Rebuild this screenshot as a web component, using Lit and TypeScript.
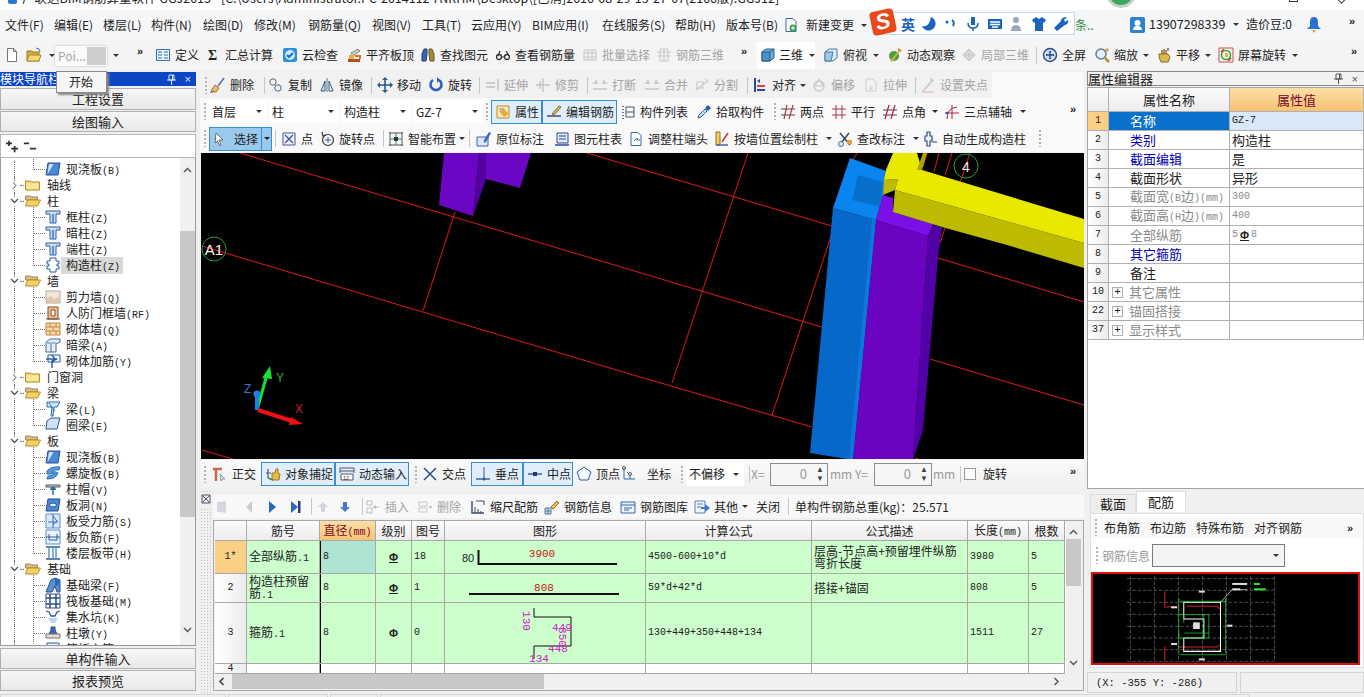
import { LitElement, html, css, svg, nothing } from "lit";
import { customElement } from "lit/decorators.js";

type Item = { x: number; k?: string; ic?: string; t?: string; dis?: boolean; w?: number; cls?: string; v?: string };
const T = (c: number, ic: string, t?: string, o: Partial<Item> = {}): Item => ({ x: c - 8, k: "tool", ic, t, ...o });
const D = (c: number, ic: string, t?: string): Item => T(c, ic, t, { dis: true });
const C = (c: number): Item => ({ x: c - 4, k: "caret" });
const S = (c: number): Item => ({ x: c, k: "sep" });
const G = (c: number): Item => ({ x: c - 1, k: "grip" });
const M = (c: number): Item => ({ x: c - 5, k: "more" });
const L = (x: number, t: string, cls = ""): Item => ({ x, k: "text", t, cls });
const On = (x: number, w: number, ic: string, t: string): Item => ({ x, w, k: "on", ic, t });
const Sel = (x: number, w: number, t: string): Item => ({ x, w, k: "sel", t });
const End = (x: number): Item => ({ x, k: "end" });

const s = (p: string, c = "#333", w = 1) => svg`<path d=${p} fill="none" stroke=${c} stroke-width=${w}/>`;
const f = (p: string, c: string, st = "none") => svg`<path d=${p} fill=${c} stroke=${st} stroke-width="1"/>`;

const IC: Record<string, any> = {
  doc: svg`${f("M3.5 1.5h6l3 3v10h-9z", "#fff", "#777")}${s("M9.5 1.5v3h3", "#777")}`,
  open: svg`${f("M1 4h5l1 1h6v9H1z", "#d9a93a", "#9a7a20")}${f("M3 8h12l-2 6H1z", "#f6d878", "#a98a2a")}${s("M10 1l3 1 1 3", "#3a78c8")}`,
  def: svg`${f("M1.5 2.5h13v11h-13z", "#eaf3fc", "#2f6fb6")}${s("M3 5h4M3 8h4M3 11h4M9 5h4M9 8h4M9 11h4", "#2f6fb6")}`,
  sigma: svg`<text x="3" y="13" font-size="14" font-weight="700" font-family="Liberation Serif, serif" fill="#222">Σ</text>`,
  check: svg`${f("M1 3q0-2 2-2h10q2 0 2 2v10q0 2-2 2H3q-2 0-2-2z", "#2a8ee0")}<circle cx="8" cy="8" r="5" fill="#cfe8fb"/>${s("M5 8l2 2 4-4", "#1a6fc0", 2)}`,
  level: svg`${f("M2 12h12v3H2z", "#b84a20")}${f("M5 6l7-4 2 2-7 5z", "#c9c9b8", "#888")}${f("M3 8h5v4H3z", "#e6b040")}${s("M9 9h5v3", "#d27a20", 2)}`,
  binoc: svg`${f("M2 7l2-5h3v5l-1 7H2z", "#3a66b8", "#223a70")}${f("M14 7l-2-5H9v5l1 7h4z", "#a58a30", "#6a5a20")}`,
  glass: svg`<circle cx="4" cy="10" r="2.5" fill="none" stroke="#333" stroke-width="1.3"/><circle cx="12" cy="10" r="2.5" fill="none" stroke="#333" stroke-width="1.3"/>${s("M6.5 10h3M5 4l-2 5M11 4l3 5", "#333", 1.2)}`,
  grid: svg`${s("M2 3h12v10H2zM2 6h12M2 10h12M6 3v10M10 3v10", "#c4c4c4")}`,
  grid2: svg`${s("M4 2h8v12H4zM1 5h14M1 9h14M8 2v12", "#c4c4c4")}`,
  cube: svg`${f("M2 5l4-3h8v9l-4 3H2z", "#6fb0d8", "#245a88")}${f("M2 5h8v9H2z", "#4a90c4", "#245a88")}${s("M10 5l4-3", "#245a88")}`,
  top: svg`${f("M2 5l4-3h8v9l-4 3H2z", "#d8ecfa", "#4a7aa0")}${f("M2 5h8l-2 9H2z", "#9cc8e6", "#4a7aa0")}`,
  orbit: svg`<circle cx="7" cy="9" r="5" fill="#4aa040"/>${f("M3 14L12 3l1 1-8 11z", "#d8b040")}${s("M11 2l3 2", "#d08020", 2)}`,
  local: svg`${f("M2 8l6-6 6 6-6 6z", "#dcdcdc", "#bbb")}${s("M4 8h8M8 4v8", "#c4c4c4")}`,
  full: svg`<circle cx="8" cy="8" r="6.5" fill="#cfe0f4" stroke="#2a4a88" stroke-width="1.4"/>${s("M8 4v8M4 8h8", "#2a4a88", 1.4)}${s("M7 5l1-1 1 1M7 11l1 1 1-1M5 7L4 8l1 1M11 7l1 1-1 1", "#2a4a88")}`,
  zoom: svg`<circle cx="7" cy="7" r="5" fill="#e4eef8" stroke="#6a7a92" stroke-width="1.5"/>${s("M11 11l4 4", "#b89030", 2.5)}${s("M13 1v4M11 3h4", "#c09030")}`,
  hand: svg`${f("M5 15l-2-5V7h9l2 3-2 5z", "#e0b850", "#8a6a20")}${s("M6 7V3M8 7V2M10 7V3", "#8a6a20", 1.4)}${s("M12 1v3M11 2h2", "#666")}`,
  rot: svg`${f("M1 1h14v14H1z", "#eef7ee", "#d05050")}<circle cx="8" cy="8" r="4.5" fill="none" stroke="#3aa040" stroke-width="1.6"/>${s("M3 5l3-3M13 11l-3 3", "#d04040", 1.6)}${f("M7 6h3v4H7z", "#e0b040")}`,
  broom: svg`${s("M14 1L8 9", "#5a70b0", 1.6)}${f("M5 8l4 3-3 4-5-1z", "#e4c070", "#a07030")}${f("M1 14l3 1-4 1z", "#a040a0")}`,
  copy: svg`<circle cx="5" cy="5" r="3.2" fill="none" stroke="#666"/><circle cx="10" cy="11" r="3.2" fill="none" stroke="#3a6a9a"/>${s("M7 7l2 2", "#999")}`,
  mirror: svg`${s("M8 1v14", "#777")}${f("M6 4v10H2z", "#d8e6f2", "#2a5a8a")}${f("M10 4v10h4z", "#fff", "#2a5a8a")}`,
  move: svg`${s("M8 1v14M1 8h14", "#2a5a8a", 1.6)}${f("M8 0l3 3H5zM8 16l-3-3h6zM0 8l3-3v6zM16 8l-3 3V5z", "#2a5a8a")}`,
  turn: svg`<path d="M5 3a5.5 5.5 0 1 0 6 0" fill="none" stroke="#2a60c0" stroke-width="2.6"/>${f("M9 0v6l3-3z", "#2a60c0")}`,
  ext: svg`${s("M2 6h9M2 10h9M14 2v12", "#c0c0c0", 1.4)}`,
  trim: svg`${s("M1 8h14M8 1v14M5 4v8", "#c4c4c4", 1.4)}`,
  brk: svg`${s("M1 6h5M10 6h5M1 12h14M4 3v4M12 3v4", "#c8c8c0", 1.6)}`,
  split: svg`${s("M2 13L14 4M3 5h6v6H3z", "#c8c8c8", 1.2)}${s("M11 2l3 2", "#c8c8c8")}`,
  align: svg`${s("M3 1v14", "#2a4a98", 2)}${f("M5 4l3-2v4z", "#2a4a98")}${f("M5 8h8v2H5z", "#d04040")}${f("M5 12h8v2H5z", "#2a4a98")}`,
  offset: svg`<circle cx="8" cy="9" r="5" fill="none" stroke="#c8c8c8" stroke-width="1.4"/>${s("M8 2l-4 7h8z", "#c8c8c8")}`,
  stretch: svg`${s("M3 2h7l3 3v9H3z", "#cfcfcf")}${s("M6 9l3 3M9 9v3H6", "#cfcfcf")}`,
  nodes: svg`${s("M3 14L13 3", "#c8c8c8", 1.6)}${s("M2 15h12", "#d8b0a0")}${f("M11 1l3 3-2 1-2-2z", "#c8c8c8")}`,
  attr: svg`${f("M2 2h12v12H2z", "#f8e8b8", "#b89030")}${f("M4 7l5-2 5 5-5 3z", "#e4a840")}${s("M4 5h5", "#888")}`,
  pen: svg`${s("M1 12h14", "#445", 1.4)}${f("M6 10l7-8 2 1-7 8z", "#e0c060", "#806a20")}`,
  list: svg`${s("M3 2v1M3 5v1M3 8v1M3 11v1M3 14v1", "#2a4a88", 1.5)}${s("M6 3h8M6 8h8M6 13h8M14 3v10M6 3v10", "#456")}`,
  drop: svg`${f("M2 14l1-3 6-6 2 2-6 6z", "#bfe0fa", "#2a5aa8")}${f("M9 4l3-3 3 3-3 3z", "#2a5aa8")}`,
  two: svg`${s("M1 5h14M1 11h14", "#445")}${s("M4 15L7 1M9 15L13 1", "#b04040", 1.2)}`,
  par: svg`${s("M1 5h14M1 11h14M5 1v14M11 1v14", "#b03050")}`,
  ang: svg`${s("M1 6h14M1 11h14", "#445")}${s("M3 15L7 1M9 15L13 1", "#b02040", 1.2)}`,
  three: svg`${s("M1 9h14M8 1v14", "#b02040")}${s("M3 15Q3 4 13 3", "#b02040")}<circle cx="3" cy="9" r="1.3" fill="#2a5aa8"/>`,
  cur: svg`${f("M5 2l7 7H8l2 5-1.5.7L6.5 10 4 12z", "#fff", "#667")}`,
  pt: svg`${f("M2 2h12v12H2z", "#eef2fa", "#445a9a")}${s("M4 4l8 8M12 4l-8 8", "#445a9a", 1.4)}`,
  rpt: svg`<circle cx="9" cy="9" r="5.5" fill="none" stroke="#333" stroke-width="1.2"/>${s("M9 6v6M6 9h6", "#2a5aa8")}${s("M3 1l1 4 3-1", "#333", 1.2)}`,
  smart: svg`${s("M2 2h12v12H2z", "#555")}${s("M8 2v12M2 8h12", "#2a8a60")}<rect x="6" y="6" width="4" height="4" fill="#334" />${s("M1 1l2 2M15 1l-2 2M1 15l2-2M15 15l-2-2", "#555")}`,
  ann: svg`${f("M1 6h11v9H1z", "#dbe7f8", "#3a64a8")}${f("M8 9l5-8 2 1-5 9-2 1z", "#3a68c0")}`,
  tbl: svg`${f("M3 2h11v10H3z", "#e4ecfa", "#2a4a98")}${s("M5 5h7M5 8h7", "#2a4a98")}${s("M1 14h14", "#2a4a98", 1.5)}`,
  adj: svg`${f("M3 1.500h7l3 3v10H3z", "#fff", "#3a6ab0")}${s("M6 10l3-3v2h3", "#3a6ab0")}`,
  newc: svg`${f("M3 1.500h7l3 3v10H3z", "#fff", "#3a6ab0")}<circle cx="10" cy="11" r="3.500" fill="#3aa040"/>${s("M10 9v4M8 11h4", "#fff")}`,
  wallc: svg`${f("M2 1h4v13H2z", "#f0d060", "#8a7020")}${s("M2 14h12", "#5060a0", 1.5)}${s("M8 11l6-9", "#c04040", 1.6)}`,
  fix: svg`${s("M3 2l10 12M12 2L5 11", "#33465a", 1.5)}<circle cx="4" cy="13" r="2.5" fill="#d8eaf8" stroke="#4a6a8a"/>${f("M10 9h5v4h-5z", "#e0a040")}`,
  auto: svg`${s("M5 1h3v4h2v5h-2v5H5v-5H3V5h2z", "#2a4a80", 1.2)}${s("M10 11h5", "#2a4a80")}`,
  ortho: svg`${s("M1 3h9M4 3v12", "#c86a4a", 2.5)}${f("M8 8l5 5-3 0-1 2z", "#dde6ee", "#8a9aaa")}`,
  snap: svg`${s("M1 7h5M3 3v9", "#557", 1.2)}${f("M7 7l3 0 1-4 2 0 0 4 2 1-1 6H7z", "#e6b84a", "#9a7a20")}${s("M3 12l5 2", "#3a8a4a", 1.5)}`,
  dyn: svg`${s("M1 2h14v5M1 2v5", "#556")}${s("M1 5h14", "#556")}${f("M2 8h12v6H2z", "#fff", "#556")}<text x="4" y="13.500" font-size="5.500" font-family="Liberation Sans, sans-serif" fill="#333">12</text>`,
  cross: svg`${s("M2 2l12 12M14 2L2 14", "#28508c", 1.5)}`,
  perp: svg`${s("M1 13h14", "#2a5a98", 1.4)}${s("M9 1v12", "#2a5a98", 1)}<circle cx="9" cy="13" r="1.5" fill="#2a5a98"/>`,
  mid: svg`${s("M1 8h14", "#2a5a98", 1.4)}<rect x="6" y="6" width="4" height="4" fill="#223a70"/>`,
  vert: svg`${f("M8 1l7 5-3 8H4L1 6z", "#f4fbff", "#2a5a98")}`,
  coord: svg`${s("M4 13V2M4 13h11", "#2a6ab0", 1)}<circle cx="4" cy="2" r="1.500" fill="none" stroke="#555"/><circle cx="10" cy="8" r="1.500" fill="none" stroke="#555"/>${s("M7 6l2 2M10 13V9", "#2a6ab0")}`,
  first: svg`${f("M5 3l7-1v12l-7-1z", "#d4d8de")}${f("M3 3h2v10H3z", "#d4d8de")}`,
  prev: svg`${f("M11 2v12L5 8z", "#c8ccd2")}`,
  next: svg`${f("M5 2v12l7-6z", "#2a6ac4")}`,
  last: svg`${f("M3 2v12l7-6z", "#2a6ac4")}${f("M10 2h2.500v12H10z", "#2a3a78")}`,
  up: svg`${f("M8 3l5 5h-3v5H6V8H3z", "#cfd4da")}`,
  down: svg`${f("M8 13l5-5h-3V3H6v5H3z", "#4a78c8")}`,
  ins: svg`${s("M2 2h5v4H2zM2 9h5v5H2z", "#bbb")}${s("M8 8h6", "#bbb")}${f("M8 8l3-2v4z", "#bbb")}`,
  delr: svg`${s("M2 3h8v4H2zM2 9h8v4H2z", "#c8c8c8")}${s("M12 8h3", "#bbb", 1.6)}`,
  scale: svg`${s("M2 2v12h12", "#3a4a6a", 1.4)}${s("M5 14V8M8 14v-4M11 14v-2", "#3a4a6a")}${s("M6 2h8v4", "#3a4a6a")}`,
  info: svg`${f("M7 8l6-6 2 2-6 6z", "#e8c050", "#8a7020")}${f("M1 9h6v6H1z", "#c4d8ee", "#5a7ca0")}${s("M1 12h6M4 9v6", "#5a7ca0")}`,
  lib: svg`${f("M1 3h14v11H1z", "#e8f0fa", "#3a6aa8")}${s("M1 6h14M4 9h8M4 11h5", "#3a6aa8")}`,
  other: svg`${f("M1 2h10v12H1z", "#eef4fc", "#5a80b0")}${s("M3 5h6M3 8h4", "#5a80b0")}${f("M7 8h4V5l5 4-5 4v-3H7z", "#3a78d0")}`,
};

const TREE_IC: Record<string, any> = {
  fc: svg`${f("M0.500 4h5l1 1h8v8h-14z", "#f4d060", "#b09030")}${f("M1.500 6h12v6h-12z", "#fae89a")}`,
  fo: svg`${f("M0.500 3h5l1 1h6v3h-12z", "#d8c080", "#a08a40")}${f("M2.500 7h13l-3 6H0.500z", "#f6d468", "#b09030")}`,
  slab: svg`${f("M3 2h12l-2 12H1z", "#4a88d8", "#2a4a90")}${f("M4 3l-1.500 10 6-10z", "#cfe4fa")}`,
  col: svg`${f("M1 2h14v3h-4v9H5V5H1z", "#cfe0f4", "#2a5a98")}${f("M7 5h2v9H7z", "#5a90d0")}`,
  gz: svg`${f("M5 1h6v3h3v3h-2v2h2v3h-3v3H5v-3H2V9h2V7H2V4h3z", "#fff", "#2a5aa8")}`,
  wall: svg`${f("M1 2h14v12H1z", "#efe6da", "#b8a890")}${f("M2 9l4-2 3 3 5-2v5H2z", "#e0c8b0")}`,
  door: svg`${f("M3 2h10v12H3z", "#f0c090", "#8a4a20")}${f("M6 5h4v6H6z", "#fff", "#8a4a20")}${s("M1 14h14", "#555")}`,
  brick: svg`${f("M1 2h14v12H1z", "#f8d8a8", "#c08a4a")}${s("M1 6h14M1 10h14M5 2v4M11 2v4M8 6v4M5 10v4M11 10v4", "#c08a4a")}`,
  hb: svg`${f("M1 5l4-3h10v3l-4 2v8H1z", "#e4eef8", "#4a6a90")}${f("M1 5h10v2H1z", "#9abcdc")}${s("M6 7v8", "#4a6a90")}`,
  rb: svg`${f("M3 2h12v7H3z", "#fff", "#2a5aa8")}${s("M1 6h11M7 2l3 4-3 4M7 15V8l5-2", "#2a5aa8", 1.4)}`,
  beam: svg`${f("M2 1h13l-3 5h-3l-1 9H6l1-9H2z", "#cfe4f8", "#2a6aa8")}${s("M4 2l6 8", "#2a6aa8")}`,
  gl: svg`${f("M2 4l4-3h9l-3 11H1z", "#cfe0f4", "#2a5a98")}`,
  spiral: svg`${f("M2 6Q6 1 15 2l-1 3Q8 4 6 7q5-1 7 1-2 6-11 6l1-3q5 0 7-2Q6 9 2 9z", "#5aa0e0", "#2a6ab0")}`,
  cap: svg`${f("M1 4h14v2H1z", "#cfd4da", "#555")}${f("M6 6h4l1 3H5z", "#2a6ab0")}${f("M7 9h2v5H7z", "#5a90d0")}`,
  hole: svg`${f("M3 2h12l-2 12H1z", "#4a88d8", "#2a4a90")}<ellipse cx="8" cy="8" rx="3.500" ry="2" fill="#dcecfa" stroke="#2a4a90"/>`,
  sbar: svg`${f("M1 1h14v14H1z", "#d8e8fa", "#5a90c8")}${s("M8 1v14M3 9h10M8 3l4 5-4 4", "#3a6ab0")}`,
  fbar: svg`${f("M1 1h14v14H1z", "#e8f2fc", "#5a90c8")}${s("M1 8h14M4 5v6h8V5", "#2a5a98")}`,
  band: svg`${s("M1 2h14M1 14h14", "#2a5a98", 1.5)}${s("M4 2v12M8 2v12M11 2v12", "#5a90c8", 1.4)}`,
  fb: svg`${f("M1 15L6 3l4-2 5 2v12h-3l-2-6-3 6z", "#5a90d0", "#2a4a90")}${f("M10 1l5 2-2 6-3-1z", "#2a6ab0")}`,
  raft: svg`${f("M1 1h14v14H1z", "#fff", "#2a4a90")}${s("M1 5h14M1 11h14M5 1v14M11 1v14", "#2a4a90", 1.5)}`,
  pit: svg`${s("M1 2l3 1 2 4h4l2-4 3-1", "#2a5a98", 1.3)}${f("M3 9h10l-3 5H6z", "#bcd4ee")}`,
  dun: svg`${f("M6 2h4v3l2 4H4l2-4z", "#3a68b0", "#2a4a90")}${f("M1 9h14v4H1z", "#e8dcc8", "#777")}`,
  plate: svg`${f("M2 2h12v12H2z", "#e8f2fc", "#2a5aa8")}`,
};

const I = (n: string) => html`<svg class="ic" viewBox="0 0 16 16">${IC[n]}</svg>`;

const menuRow: Item[] = [
  L(5, "文件(F)"), L(54, "编辑(E)"), L(103, "楼层(L)"), L(151, "构件(N)"), L(203, "绘图(D)"), L(254, "修改(M)"), L(308, "钢筋量(Q)"),
  L(372, "视图(V)"), L(422, "工具(T)"), L(471, "云应用(Y)"), L(532, "BIM应用(I)"), L(602, "在线服务(S)"), L(675, "帮助(H)"), L(726, "版本号(B)"),
  T(791, "newc"), L(806, "新建变更"), C(864), L(1075, "条..", "gr"),
];

const tb1: Item[] = [
  T(12, "doc"), T(34, "open"), C(52), C(116), M(142), T(163, "def", "定义"), T(213, "sigma", "汇总计算"), T(290, "check", "云检查"),
  T(354, "level", "平齐板顶"), T(428, "binoc", "查找图元"), T(503, "glass", "查看钢筋量"), D(590, "grid", "批量选择"), D(664, "grid2", "钢筋三维"), M(746),
  { x: 760, k: "wht", ic: "cube", t: "三维", w: 58 }, C(812), T(831, "top", "俯视"), C(876), T(895, "orbit", "动态观察"), D(969, "local", "局部三维"), S(1036),
  T(1050, "full", "全屏"), T(1102, "zoom", "缩放"), C(1146), T(1164, "hand", "平移"), C(1208), T(1226, "rot", "屏幕旋转"), C(1295), M(1356),
];

const r1: Item[] = [
  G(206), T(218, "broom", "删除"), S(264), T(276, "copy", "复制"), T(327, "mirror", "镜像"), S(371), T(385, "move", "移动"), T(436, "turn", "旋转"), S(479),
  D(492, "ext", "延伸"), D(543, "trim", "修剪"), S(587), D(600, "brk", "打断"), D(652, "brk", "合并"), D(702, "split", "分割"), S(747),
  T(760, "align", "对齐"), C(803), D(819, "offset", "偏移"), D(871, "stretch", "拉伸"), S(915), D(928, "nodes", "设置夹点"), End(992),
];
const r2: Item[] = [
  G(205), Sel(209, 58, "首层"), Sel(269, 70, "柱"), Sel(341, 70, "构造柱"), Sel(413, 70, "GZ-7"), G(487),
  On(491, 51, "attr", "属性"), On(542, 75, "pen", "编辑钢筋"), T(628, "list", "构件列表"), T(704, "drop", "拾取构件"), G(775),
  T(788, "two", "两点"), T(839, "par", "平行"), T(890, "ang", "点角"), C(935), T(952, "three", "三点辅轴"), C(1023), M(1075),
];
const r3: Item[] = [
  G(205), { x: 209, k: "pick", ic: "cur", t: "选择" }, S(275), T(289, "pt", "点"), T(327, "rpt", "旋转点"), S(383), T(396, "smart", "智能布置"), C(462), S(469),
  T(484, "ann", "原位标注"), T(562, "tbl", "图元柱表"), T(636, "adj", "调整柱端头"), T(722, "wallc", "按墙位置绘制柱"), C(829), T(845, "fix", "查改标注"), C(916),
  T(930, "auto", "自动生成构造柱"), G(1040),
];
const r4: Item[] = [
  G(205), T(220, "ortho", "正交"), On(261, 74, "snap", "对象捕捉"), On(335, 74, "dyn", "动态输入"), G(416), T(430, "cross", "交点"),
  On(471, 52, "perp", "垂点"), On(523, 50, "mid", "中点"), T(584, "vert", "顶点"), T(628, "coord", ""), L(647, "坐标"), G(682), Sel(686, 58, "不偏移"), S(749),
  L(751, "X=", "off"), { x: 770, k: "spin", v: "0" }, L(830, "mm", "off"), L(855, "Y=", "off"), { x: 874, k: "spin", v: "0" }, L(933, "mm", "off"), S(960),
  { x: 964, k: "chk" }, L(983, "旋转"), M(1075),
];
const rb: Item[] = [
  D(222, "first"), D(249, "prev"), T(272, "next"), T(296, "last"), S(311), D(323, "up"), T(345, "down"), S(362), D(373, "ins", "插入"), D(425, "delr", "删除"),
  T(478, "scale", "缩尺配筋"), T(552, "info", "钢筋信息"), T(628, "lib", "钢筋图库"), T(702, "other", "其他"), C(745), L(756, "关闭"), S(788),
  L(795, "单构件钢筋总重(kg)：25.571"), End(960),
];
const rr1: Item[] = [G(1096), L(1104, "布角筋"), L(1150, "布边筋"), L(1196, "特殊布筋"), L(1254, "对齐钢筋"), M(1352)];

const tree: [number, string, string, string?][] = [
  [1, "slab", "现浇板(B)"], [0, "fc", "轴线", "r"], [0, "fo", "柱", "d"], [1, "col", "框柱(Z)"], [1, "col", "暗柱(Z)"], [1, "col", "端柱(Z)"], [1, "gz", "构造柱(Z)", "s"],
  [0, "fo", "墙", "d"], [1, "wall", "剪力墙(Q)"], [1, "door", "人防门框墙(RF)"], [1, "brick", "砌体墙(Q)"], [1, "hb", "暗梁(A)"], [1, "rb", "砌体加筋(Y)"],
  [0, "fc", "门窗洞", "r"], [0, "fo", "梁", "d"], [1, "beam", "梁(L)"], [1, "gl", "圈梁(E)"], [0, "fo", "板", "d"], [1, "slab", "现浇板(B)"], [1, "spiral", "螺旋板(B)"],
  [1, "cap", "柱帽(V)"], [1, "hole", "板洞(N)"], [1, "sbar", "板受力筋(S)"], [1, "fbar", "板负筋(F)"], [1, "band", "楼层板带(H)"], [0, "fo", "基础", "d"],
  [1, "fb", "基础梁(F)"], [1, "raft", "筏板基础(M)"], [1, "pit", "集水坑(K)"], [1, "dun", "柱墩(Y)"], [1, "plate", "筏板主筋(R)"],
];

const props: [string, string, string, string, string?][] = [
  ["1", "名称", "sel", "GZ-7", "m"], ["2", "类别", "b", "构造柱"], ["3", "截面编辑", "b", "是"], ["4", "截面形状", "", "异形"],
  ["5", "截面宽(B边)(mm)", "g", "300", "gm"], ["6", "截面高(H边)(mm)", "g", "400", "gm"], ["7", "全部纵筋", "g", "5Φ8", "gm"],
  ["8", "其它箍筋", "b", ""], ["9", "备注", "", ""], ["10", "其它属性", "gp", ""], ["22", "锚固搭接", "gp", ""], ["37", "显示样式", "gp", ""],
];

/* latin runs get the 6px-wide mono the app uses next to 12px CJK */
const mix = (str: string) => html`<span>${str.split(/([\x20-\x7e]+)/).map((p, i) => (i % 2 ? html`<span class="mono">${p}</span>` : p))}</span>`;

@customElement("app-root")
export class AppRoot extends LitElement {
  static styles = css`
    :host { display: block; width: 1364px; height: 697px; overflow: hidden; position: relative; background: #f0f0f0; color: #222;
      font: 12px/16px "Noto Sans CJK SC", "Noto Sans", sans-serif; }
    * { box-sizing: border-box; }
    .title { height: 10px; background: #fff; overflow: hidden; position: relative; display: flex; align-items: flex-start; padding-left: 22px; }
    .title span { white-space: nowrap; line-height: 16px; margin-top: -10px; font-size: 12.500px; color: #222; }
    .appi { position: absolute; left: 8px; top: -6px; width: 9px; height: 10px; background: #2a78d0; border-radius: 2px; }
    .ball { position: absolute; left: 1106px; top: -22px; width: 30px; height: 30px; border-radius: 50%; background: #3aa858; border: 3px solid #c8d0c8; }
    .winb { position: absolute; top: -7px; width: 9px; height: 9px; border: 1px solid #333; }
    .w1 { left: 1289px; } .w2 { left: 1337px; border-width: 0 1px 1px 0; transform: rotate(45deg); }
    .row { display: flex; align-items: center; flex: none; white-space: nowrap; }
    .menu { height: 30px; background: #f5f6f7; position: relative; }
    .tb1 { height: 30px; background: #f4f4f4; }
    .it { flex: none; display: flex; align-items: center; height: 100%; position: relative; }
    .ic { width: 16px; height: 16px; flex: none; display: block; }
    .lab { margin-left: 4px; }
    .dis { color: #a4a4a4; }
    .off { color: #999; }
    .gr { color: #2c8a3c; }
    .sep::before { content: ""; width: 1px; height: 17px; background: #c6c6c6; display: block; }
    .grip::before { content: ""; width: 2px; height: 17px; display: block; background: repeating-linear-gradient(#b4b4b4 0 2px, transparent 2px 4px); }
    .caret::before { content: ""; margin-left: 1px; border: 3px solid transparent; border-top-color: #333; border-bottom: 0; display: block; }
    .more { font: 700 11px/14px "Liberation Sans", sans-serif; align-items: flex-start; padding-top: 4px; color: #222; }
    .on .box { display: flex; align-items: center; height: 24px; width: 100%; padding-left: 3px; background: #dfeefa; border: 1px solid #3a8ccc; }
    .wht .box { display: flex; align-items: center; height: 27px; width: 100%; background: #fff; margin-left: -3px; padding-left: 3px; }
    .wht .lab { margin-left: 3px; }
    .sel .box { display: flex; align-items: center; justify-content: space-between; width: 100%; height: 23px; background: #fff; padding: 0 5px 0 3px; }
    .sel .box::after { content: ""; border: 3px solid transparent; border-top-color: #333; border-bottom: 0; }
    .pick .box { display: flex; align-items: center; width: 63px; height: 24px; background: #99c9ec; border: 1px solid #3a8ccc; padding-left: 1px; }
    .pick .lab { margin-left: 7px; }
    .pick .box i { margin-left: 3px; width: 12px; height: 22px; border-left: 1px solid #3a8ccc; display: flex; align-items: center; justify-content: center; }
    .pick .box i::before { content: ""; border: 3px solid transparent; border-top-color: #222; border-bottom: 0; }
    .spin { width: 58px; height: 23px; border: 1px solid #8c8c8c; background: #f6f6f6; display: flex; align-items: center; justify-content: flex-end; color: #999; font-size: 13px; }
    .spin b { width: 14px; margin-left: 6px; text-align: center; font: 8px/9px "Liberation Sans", sans-serif; color: #444; white-space: pre; }
    .chk { width: 12px; height: 12px; background: #fff; border: 1px solid #999; }
    .main { display: flex; height: 623px; }
    .left { width: 196px; margin-right: 4px; padding-top: 2px; display: flex; flex-direction: column; flex: none; }
    .lhead { height: 14px; background: #0c46c4; color: #fff; display: flex; align-items: center; justify-content: space-between; padding: 0 5px 0 0; }
    .lhead span { letter-spacing: 0; line-height: 14px; }
    .pin { display: flex; gap: 9px; color: #dfe8ff; font-size: 11px; align-items: center; font-family: "Liberation Sans", sans-serif; }
    .pin svg { width: 9px; height: 11px; display: block; }
    .nav { height: 21px; flex: none; background: linear-gradient(#f6f6f6, #e9e9e9); border: 1px solid #b0b0b0; display: flex; align-items: center; justify-content: center; font-size: 13px; }
    .nav.a { margin-top: 2px; height: 22px; }
    .nav.b { margin-top: 1px; }
    .nav.c { margin-top: 2px; }
    .exp { height: 23px; margin-top: 2px; flex: none; background: #fff; border: 1px solid #b8b8b8; border-bottom: 0; display: flex; align-items: center; padding-left: 4px; gap: 4px; }
    .exp svg { width: 14px; height: 14px; }
    .treebox { height: 489px; flex: none; display: flex; background: #fff; border: 1px solid #9a9a9a; border-top: 1px solid #b8b8b8; overflow: hidden; }
    .tree { flex: 1; padding-top: 3px; overflow: hidden; }
    .tr { height: 16px; display: flex; align-items: center; position: relative; flex: none; }
    .tr::before { content: ""; position: absolute; left: 13px; top: 0; bottom: 0; border-left: 1px dotted #777; }
    .c1::after { content: ""; position: absolute; left: 32px; width: 11px; top: -8px; height: 16px; border-left: 1px dotted #777; border-bottom: 1px dotted #777; }
    .c0::after { content: ""; position: absolute; left: 19px; width: 4px; top: 8px; border-top: 1px dotted #777; }
    .tr .ic { position: relative; z-index: 1; }
    .c0 .ic { margin-left: 24px; } .c1 .ic { margin-left: 44px; }
    .c0 .tl { margin-left: 5px; } .c1 .tl { margin-left: 4px; }
    .tl { padding: 0 2px 0 1px; line-height: 16px; }
    .tsel .tl { background: #d9d9d9; padding-right: 3px; margin-left: 0; padding-left: 5px; }
    .mono { font: 10px/12px "Liberation Mono", "DejaVu Sans Mono", monospace; }
    .chev { position: absolute; left: 9px; top: 5px; width: 9px; height: 7px; z-index: 2; background: #fff; }
    .vs { width: 15px; flex: none; background: #f0f0f0; display: flex; flex-direction: column; align-items: center; }
    .vs svg { width: 9px; height: 6px; flex: none; }
    .vs1 .up { margin-top: 9px; } .vs1 .th { margin-top: 58px; height: 286px; }
    .vs1 .dn { margin-top: 110px; }
    .th { width: 15px; background: #c8c8c8; flex: none; }
    .center { width: 884px; flex: none; display: flex; flex-direction: column; padding-top: 2px; }
    .r1 { height: 26px; background: #fafafa; }
    .r1 .shade { display: flex; height: 100%; background: #f1f1f1; }
    .r2, .r3 { height: 27px; background: #f9f9f9; }
    .view { height: 306px; margin: 1px 0 0 1px; background: #000; flex: none; overflow: hidden; }
    .view svg { display: block; width: 883px; height: 306px; }
    .r4 { height: 28px; margin-top: 1px; background: linear-gradient(#fafafa, #f1f1f1); }
    .lower { height: 203px; margin-top: 2px; display: flex; flex: none; }
    .strip { width: 13px; flex: none; background: radial-gradient(circle, #c0c0c0 0.7px, transparent 1px) 0 0 / 3px 3px; }
    .strip svg { display: block; width: 12px; height: 14px; background: #f0f0f0; margin-top: 3px; }
    .lmain { flex: 1; display: flex; flex-direction: column; min-width: 0; }
    .rb { height: 23px; margin-top: 5px; background: #f8f8f8; }
    .tbox { height: 171px; margin-top: 2px; border: 1px solid #a8a8a8; background: #f0f0f0; display: flex; flex-direction: column; flex: none; }
    .tup { display: flex; height: 153px; flex: none; }
    .gridw { width: 851px; margin-left: 1px; flex: none; overflow: hidden; }
    .grid { display: grid; grid-template-columns: 32px 73px 56px 36px 33px 201px 166px 156px 61px 36px; grid-template-rows: 20px 33px 29px 61px 10px; background: #fff; height: 153px; }
    .cell { border-right: 1px solid #a8a8a8; border-bottom: 1px solid #a8a8a8; display: flex; align-items: center; padding-left: 2px; overflow: hidden; background: #ccffcc; line-height: 12px; min-width: 0; }
    .cell svg { display: block; width: 201px; flex: none; margin-left: -2px; }
    .hd { background: linear-gradient(#fbfbfb, #ececec); justify-content: center; padding: 0; line-height: 16px; }
    .hd.hot { background: linear-gradient(#fbdfa6, #f7c273); color: #7a0a28; }
    .rh { background: linear-gradient(90deg, #fff, #ececec); justify-content: center; padding: 0; }
    .rh.hot { background: #fbcf86; }
    .ctr { justify-content: center; padding: 0; }
    .blk { box-shadow: inset 1px 0 0 #000; padding-left: 3px; }
    .act { background: #aee4d4; }
    .wc { background: #fff; }
    .u { border-bottom: 1px solid #222; line-height: 10px; font: 700 11px/10px "Liberation Sans", sans-serif; }
    .u2 { font: 700 11px/10px "Liberation Sans", sans-serif; }
    .vs2 { width: 15px; margin-left: 0; }
    .vs2 .up { margin-top: 8px; } .vs2 .th { margin-top: 4px; height: 47px; } .vs2 .dn { margin-top: 74px; }
    .hs { height: 15px; flex: none; display: flex; align-items: center; background: #f0f0f0; }
    .hs svg { width: 7px; height: 9px; flex: none; }
    .hs .a { margin-left: 4px; }
    .hs .t { width: 312px; height: 15px; margin-left: 7px; background: #c8c8c8; }
    .hs .z { margin-left: 509px; }
    .right { padding-top: 1px; flex: none; display: flex; flex-direction: column; margin-left: 3px; width: 277px; }
    .rhead { height: 15px; border-top: 1px solid #8a8a8a; border-bottom: 1px solid #8a8a8a; border-left: 1px solid #8a8a8a; background: #f2f2f2; display: flex; justify-content: space-between; align-items: center; padding-right: 6px; font-size: 13px; flex: none; }
    .rhead .pin { color: #555; }
    .pbox { height: 402px; margin-top: 1px; background: #fff; border: 1px solid #a4a4a4; border-right: 0; flex: none; padding-left: 0; }
    .pg { display: grid; grid-template-columns: 21px 121px 134px; grid-template-rows: 24px repeat(12, 19px); }
    .pg > div { border-right: 1px solid #b0b0b0; border-bottom: 1px solid #b0b0b0; display: flex; align-items: center; overflow: hidden; padding-left: 2px; line-height: 14px; font-size: 13px; }
    .pg .ph { background: linear-gradient(#fbfbfb, #ececec); justify-content: center; padding: 0; font-size: 13px; }
    .pg .pv { background: linear-gradient(#fbdfa6, #f7c273); color: #7a0a28; }
    .pg .pr { background: linear-gradient(90deg, #fff, #ececec); justify-content: center; padding: 0; font: 10px/12px "Liberation Mono", monospace; }
    .pg .pr.hot { background: #fbcf86; }
    .pn { padding-left: 21px !important; }
    .pn.sel { background: #0a72cc; color: #fff; }
    .pn.b { color: #0000b0; } .pn.g { color: #8a8a8a; } .pn.gp { color: #8a8a8a; padding-left: 3px !important; }
    .pn .plus { width: 11px; height: 11px; border: 1px solid #b0b0b0; margin-right: 6px; margin-left: 0; font: 11px/9px "Liberation Mono", monospace; text-align: center; color: #222; flex: none; }
    .vsel { background: #d8e8f8; }
    .pg .gm { color: #8a8a8a; }
    .pg .gm .u { color: #222; margin: 0 2px; }
    .tabs { display: flex; height: 21px; margin-top: 3px; padding-left: 3px; flex: none; }
    .tab { display: flex; align-items: center; justify-content: center; width: 46px; background: #efefef; border: 1px solid #dcdcdc; border-bottom: 0; margin-top: 2px; font-size: 13px; }
    .tab.on2 { width: 50px; background: #fff; height: 21px; margin-top: -1px; }
    .tc { height: 155px; margin-left: 3px; background: #fff; border: 1px solid #dedede; flex: none; display: flex; flex-direction: column; }
    .rt { height: 21px; margin-top: 3px; background: #f8f8f8; flex: none; }
    .rsel { height: 23px; margin-top: 6px; flex: none; }
    .combo { height: 23px; width: 133px; border: 1px solid #7a7a7a; background: #f4f4f4; display: flex; align-items: center; justify-content: flex-end; padding-right: 5px; margin-left: 2px; }
    .combo::after { content: ""; border: 3px solid transparent; border-top-color: #333; border-bottom: 0; }
    .prev { margin: 5px 0 0 0; width: 269px; height: 93px; background: #000; border: 2px solid #e01010; flex: none; overflow: hidden; }
    .prev svg { width: 265px; height: 89px; display: block; }
    .stat { display: flex; height: 21px; margin-top: 4px; flex: none; gap: 3px; }
    .stat div { border: 1px solid #d4d4d4; background: #f0f0f0; display: flex; align-items: center; padding-left: 8px; height: 21px; }
    .stat .s1 { width: 150px; font: 10.500px/14px "Liberation Mono", monospace; }
    .stat .s2 { flex: 1; }
    .foot { height: 4px; display: flex; gap: 2px; background: #f0f0f0; }
    .foot i { display: block; border: 1px solid #d4d4d4; border-bottom: 0; height: 4px; margin-top: 1px; }
    .foot .f1 { width: 226px; } .foot .f2 { width: 100px; } .foot .f3 { width: 48px; } .foot .f4 { width: 870px; }
    /* overlays */
    .tip { position: absolute; left: 55px; top: 46px; width: 52px; height: 20px; background: #fafafa; display: flex; align-items: center; color: #a8a8a8; padding-left: 3px; box-shadow: 0 0 2px #bbb; }
    .tip i { position: absolute; right: 1px; top: 1px; bottom: 1px; width: 19px; background: #cdcdcd; }
    .pop { position: absolute; left: 56px; top: 71px; width: 51px; height: 22px; background: #f6f6f6; border: 1px solid #8a8a8a; box-shadow: 2px 2px 2px #888; display: flex; align-items: center; padding-left: 12px; }
    .ime { position: absolute; left: 879px; top: 12px; width: 196px; height: 23px; background: #fff; border: 1px solid #c8d8ec; display: flex; align-items: center; padding-left: 21px; gap: 6px; color: #1a64c0; font-weight: 700; font-size: 14px; }
    .ime svg { width: 16px; height: 16px; flex: none; }
    .logo { position: absolute; left: 871px; top: 10px; width: 24px; height: 24px; background: #e8481c; border-radius: 4px; transform: rotate(-12deg); color: #fff; text-align: center; font: italic 700 22px/24px "Liberation Sans", sans-serif; }
    .usr { position: absolute; left: 1130px; top: 17px; width: 15px; height: 16px; }
    .acc { position: absolute; left: 1149px; top: 16px; font-size: 12.500px; }
    .acc2 { position: absolute; left: 1246px; top: 16px; }
    .acar { position: absolute; left: 1233px; top: 23px; border: 3px solid transparent; border-top-color: #333; border-bottom: 0; }
    .bell { position: absolute; left: 1306px; top: 16px; width: 16px; height: 18px; }
    .mo { position: absolute; left: 1349px; top: 14px; font: 700 11px/14px "Liberation Sans", sans-serif; }
  `;

  private row(items: Item[], left: number, cls: string) {
    return html`<div class="row ${cls}" style="padding-left:${items[0].x - left}px">${items.map((it, i) => this.item(it, items[i + 1]))}</div>`;
  }

  private item(it: Item, next?: Item) {
    if (it.k === "end") return nothing;
    const gap = next ? next.x - it.x : 0;
    const st = next ? (it.w ? `width:${it.w}px;margin-right:${gap - it.w}px` : `width:${gap}px`) : "";
    const lab = it.t ? html`<span class="lab ${it.dis ? "dis" : ""}">${it.t}</span>` : nothing;
    switch (it.k) {
      case "sep": case "grip": case "caret": return html`<div class="it ${it.k}" style=${st}></div>`;
      case "more": return html`<div class="it more" style=${st}>»</div>`;
      case "text": return html`<div class="it ${it.cls}" style=${st}>${it.t}</div>`;
      case "on": return html`<div class="it on" style=${st}><div class="box">${I(it.ic!)}${lab}</div></div>`;
      case "wht": return html`<div class="it wht" style=${st}><div class="box">${I(it.ic!)}${lab}</div></div>`;
      case "sel": return html`<div class="it sel" style=${st}><div class="box">${it.t}</div></div>`;
      case "pick": return html`<div class="it pick" style=${st}><div class="box">${I(it.ic!)}${lab}<i></i></div></div>`;
      case "spin": return html`<div class="it" style=${st}><div class="spin">${it.v}<b>▲\n▼</b></div></div>`;
      case "chk": return html`<div class="it" style=${st}><div class="chk"></div></div>`;
      default: return html`<div class="it" style=${st}>${I(it.ic!)}${lab}</div>`;
    }
  }

  private treeView() {
    return tree.map(([lv, ic, label, mark]) => html`
      <div class="tr c${lv} ${mark === "s" ? "tsel" : ""}">
        ${mark === "r" || mark === "d" ? html`<svg class="chev" viewBox="0 0 9 7">${s(mark === "r" ? "M3 0l3 3.500-3 3.500" : "M1 1l3.500 3.500L8 1", mark === "r" ? "#999" : "#555", 1.3)}</svg>` : nothing}
        <svg class="ic" viewBox="0 0 16 16">${TREE_IC[ic]}</svg><span class="tl">${mix(label)}</span>
      </div>`);
  }

  private viewport() {
    const red = (a: string, w = 1) => svg`<path d=${a} stroke="#e01818" stroke-width=${w} fill="none"/>`;
    return html`<svg viewBox="201 153 883 306">
      ${red("M202 246L640 377L812 427M915 458L925 461")}
      ${red("M240 153L835 331M930 359L1084 405")}
      ${red("M587 153L832 226M938 258L1084 302")}
      ${red("M202 450L236 460")}
      ${red("M455 212L423 311")}
      ${red("M748 153L672 383")}
      ${red("M832 233L772 415")}
      ${red("M970 153L940 243")}
      ${red("M927 153L923 167M939 153L934 172M952 153L945 175M857 153L853 160")}
      <polygon points="444,153 439,205 473,216 479,153" fill="#6a06c4"/>
      <polygon points="479,153 473,216 486,179 486,153" fill="#5200a4"/>
      <polygon points="486,153 486,179 520,188 531,153" fill="#6a06c4"/>
      <polygon points="833,208 876,220 853,460 810,453" fill="#0668c8"/>
      <polygon points="872,219 876,220 853,460 849,459" fill="#0a78dc"/>
      <polygon points="850,158 886,171 883,195 876,220 833,208" fill="#0a84ee"/>
      <polygon points="858,175 883,182 880,207 852,200" fill="#0670cc"/>
      <polygon points="876,220 928,236 913,460 853,460" fill="#6a04c0"/>
      <polygon points="883,195 893,198 893,212 933,224 928,236 876,220" fill="#7a10e6"/>
      <polygon points="933,225 942,227 938,257 923,430 913,460 928,236" fill="#5200a8"/>
      <polygon points="895,190 1084,243 1084,268 1007,245 942,227 893,212" fill="#bdbb00"/>
      <polygon points="884,180 898,179 895,190 883,195" fill="#bdbb00"/>
      <polygon points="893,153 917,153 922,170 1084,219 1084,243 895,190 898,179 884,180 886,170" fill="#e8e800"/>
      <polygon points="923,153 927,153 922,170 917,170" fill="#a8a600"/>
      <circle cx="966" cy="166" r="12" fill="none" stroke="#2a9a3a"/>
      <text x="966" y="172" text-anchor="middle" fill="#eee" font-size="14" font-family="Liberation Sans, sans-serif">4</text>
      <circle cx="214" cy="249" r="12" fill="none" stroke="#2a9a3a"/>
      <text x="214" y="255" text-anchor="middle" fill="#eee" font-size="15" font-family="Liberation Sans, sans-serif">A1</text>
      <path d="M257 410L266 378" stroke="#18e030" stroke-width="3"/><polygon points="270,366 262,378 272,379" fill="#18e030"/>
      <path d="M257 410V396" stroke="#1a80e8" stroke-width="4"/><circle cx="257" cy="394" r="3.500" fill="#1a80e8"/>
      <path d="M258 410L292 421" stroke="#f01010" stroke-width="4"/><polygon points="303,424 291,417 289,425" fill="#f01010"/>
      <g font-size="12" font-family="Liberation Sans, sans-serif" font-weight="300">
        <text x="276" y="382" fill="#3aa048">Y</text><text x="244" y="393" fill="#3a78d0">Z</text><text x="295" y="413" fill="#c82020">X</text>
      </g>
    </svg>`;
  }

  private table() {
    const mag = "#d020c8";
    const tx = (x: number, y: number, t: string, c: string, r = 0) => svg`<text x=${x} y=${y} fill=${c} font-size="11" text-anchor="middle" font-family="Liberation Mono, monospace" transform=${r ? `rotate(${r} ${x} ${y})` : ""}>${t}</text>`;
    const heads: [string, string?][] = [["" ], ["筋号"], ["直径(mm)", "hot"], ["级别"], ["图号"], ["图形"], ["计算公式"], ["公式描述"], ["长度(mm)"], ["根数"]];
    return html`<div class="grid">
      ${heads.map(([h, c]) => html`<div class="cell hd ${c ?? ""}">${mix(h)}</div>`)}
      <div class="cell rh hot"><span class="mono">1*</span></div><div class="cell">${mix("全部纵筋.1")}</div><div class="cell blk act"><span class="mono">8</span></div>
      <div class="cell ctr"><span class="u">Φ</span></div><div class="cell"><span class="mono">18</span></div>
      <div class="cell"><svg viewBox="445 541 201 32" height="32">
        <text x="462" y="562" font-size="11" fill="#222" font-family="Liberation Sans, sans-serif">80</text>
        <path d="M478.500 550V564H617" stroke="#111" stroke-width="2" fill="none"/>${tx(542, 557, "3900", "#c01818")}
      </svg></div>
      <div class="cell"><span class="mono">4500-600+10*d</span></div><div class="cell"><div>层高-节点高+预留埋件纵筋<br />弯折长度</div></div><div class="cell"><span class="mono">3980</span></div><div class="cell"><span class="mono">5</span></div>

      <div class="cell rh"><span class="mono">2</span></div><div class="cell"><div>构造柱预留<br />筋<span class="mono">.1</span></div></div><div class="cell blk"><span class="mono">8</span></div>
      <div class="cell ctr"><span class="u">Φ</span></div><div class="cell"><span class="mono">1</span></div>
      <div class="cell"><svg viewBox="445 574 201 28" height="28"><path d="M469 594H619" stroke="#111" stroke-width="2"/>${tx(544, 591, "808", "#c01818")}</svg></div>
      <div class="cell"><span class="mono">59*d+42*d</span></div><div class="cell">搭接+锚固</div><div class="cell"><span class="mono">808</span></div><div class="cell"><span class="mono">5</span></div>

      <div class="cell rh"><span class="mono">3</span></div><div class="cell">${mix("箍筋.1")}</div><div class="cell blk"><span class="mono">8</span></div>
      <div class="cell ctr"><span class="u2">Φ</span></div><div class="cell"><span class="mono">0</span></div>
      <div class="cell"><svg viewBox="445 603 201 60" height="60">
        <path d="M534 608V617H571V646H534V659" stroke="#111" fill="none"/>
        ${tx(523, 621, "130", mag, 90)}${tx(562, 631, "449", mag)}${tx(559, 637, "350", mag, 90)}${tx(558, 652, "448", mag)}${tx(539, 662, "134", mag)}
      </svg></div>
      <div class="cell"><span class="mono">130+449+350+448+134</span></div><div class="cell"></div><div class="cell"><span class="mono">1511</span></div><div class="cell"><span class="mono">27</span></div>

      <div class="cell rh"><span class="mono">4</span></div><div class="cell wc"></div><div class="cell wc blk"></div>
      ${[0, 1, 2, 3, 4, 5, 6].map(() => html`<div class="cell wc"></div>`)}
    </div>`;
  }

  private preview() {
    const v = [140, 212, 284, 356, 428, 500, 572];
    const h = [287, 322, 358, 394, 430, 465, 500, 535];
    return html`<svg viewBox="28 274 794 265">
      ${v.map((x) => svg`<path d="M${x} 280V535" stroke="#777" stroke-width="2" stroke-dasharray="10 6"/>`)}
      ${h.map((y) => svg`<path d="M130 ${y}H575" stroke="#777" stroke-width="2" stroke-dasharray="10 6"/>`)}
      <path d="M243 325V372H285M243 490V532M285 492H400L410 485V380L400 370H310" stroke="#d82020" stroke-width="3" fill="none"/>
      <path d="M300 358H410V505H300V465H360V408H300Z" stroke="#fff" stroke-width="3" fill="none"/>
      <path d="M285 345V510M425 345V510M285 355H430M285 515H430M300 395V420M285 395H375V465H285V450M300 450H375M360 395V470" stroke="#20e030" stroke-width="2" fill="none"/>
      <path d="M410 358L445 320H490" stroke="#fff" stroke-width="2" fill="none"/>
      <g fill="#ddd"><rect x="345" y="323" width="18" height="6"/><rect x="262" y="370" width="18" height="6"/><rect x="262" y="480" width="18" height="6"/><rect x="345" y="526" width="18" height="6"/><rect x="430" y="425" width="16" height="6"/><rect x="328" y="418" width="20" height="20"/><rect x="445" y="300" width="45" height="6"/><rect x="445" y="316" width="24" height="6"/></g>
      <g fill="#30e040"><rect x="510" y="300" width="18" height="6"/><rect x="510" y="316" width="36" height="6"/></g>
    </svg>`;
  }

  render() {
    const up = html`<svg class="up" viewBox="0 0 9 6">${s("M1 5l3.500-3.500L8 5", "#555", 1.400)}</svg>`;
    const dn = html`<svg class="dn" viewBox="0 0 9 6">${s("M1 1l3.500 3.500L8 1", "#555", 1.400)}</svg>`;
    const pin = html`<span class="pin"><svg viewBox="0 0 9 11">${s("M2 1h5v5H2zM0 6h9M4.500 6v5M5.500 1v5", "currentColor")}</svg><span>×</span></span>`;
    return html`
      <div class="title"><i class="appi"></i><span>广联达BIM钢筋算量软件 GGJ2013 - [C:\\Users\\Administrator.PC-2014112 7NRHM\\Desktop\\[已消]2016-08-29-15-27-07(2166版).GGJ12]</span>
        <i class="ball"></i><i class="winb w1"></i><i class="winb w2"></i></div>
      ${this.row(menuRow, 0, "menu")}
      ${this.row(tb1, 0, "tb1")}
      <div class="main">
        <div class="left">
          <div class="lhead"><span>模块导航栏</span>${pin}</div>
          <div class="nav a">工程设置</div>
          <div class="nav b">绘图输入</div>
          <div class="exp">
            <svg viewBox="0 0 16 16">${s("M1 5h7M4.500 2v6M7 11h8M11 8v7", "#333", 2)}</svg>
            <svg viewBox="0 0 16 16">${s("M1 5h6M8 11h7", "#333", 2)}</svg>
          </div>
          <div class="treebox">
            <div class="tree">${this.treeView()}</div>
            <div class="vs vs1">${up}<div class="th"></div>${dn}</div>
          </div>
          <div class="nav c">单构件输入</div>
          <div class="nav b">报表预览</div>
        </div>
        <div class="center">
          <div class="row r1"><div class="shade" style="padding-left:${r1[0].x - 200}px;width:${992 - 200}px">${r1.map((it, i) => this.item(it, r1[i + 1]))}</div></div>
          ${this.row(r2, 200, "r2")}
          ${this.row(r3, 200, "r3")}
          <div class="view">${this.viewport()}</div>
          ${this.row(r4, 200, "r4")}
          <div class="lower">
            <div class="strip"><svg viewBox="0 0 12 14">${s("M2 2h8v8H2zM2 2l8 8M10 2l-8 8", "#556")}</svg></div>
            <div class="lmain">
              ${this.row(rb, 213, "rb")}
              <div class="tbox">
                <div class="tup">
                  <div class="gridw">${this.table()}</div>
                  <div class="vs vs2">${up}<div class="th"></div>${dn}</div>
                </div>
                <div class="hs">
                  <svg class="a" viewBox="0 0 7 9">${s("M5.500 1L2 4.500 5.500 8", "#333", 1.400)}</svg>
                  <div class="t"></div>
                  <svg class="z" viewBox="0 0 7 9">${s("M1.500 1L5 4.500 1.500 8", "#555", 1.400)}</svg>
                </div>
              </div>
            </div>
          </div>
        </div>
        <div class="right">
          <div class="rhead"><span>属性编辑器</span>${pin}</div>
          <div class="pbox">
            <div class="pg">
              <div class="ph"></div><div class="ph">属性名称</div><div class="ph pv">属性值</div>
              ${props.map(([n, name, c, val, vc]) => html`
                <div class="pr ${c === "sel" ? "hot" : ""}">${n}</div>
                <div class="pn ${c}">${c === "gp" ? html`<span class="plus">+</span>` : nothing}${mix(name)}</div>
                <div class="${vc === "m" ? "vsel" : ""} ${vc === "gm" ? "gm" : ""}">${val === "5Φ8"
                  ? html`<span class="mono">5</span><span class="u">Φ</span><span class="mono">8</span>`
                  : vc ? html`<span class="mono">${val}</span>` : val}</div>`)}
            </div>
          </div>
          <div class="tabs"><div class="tab">截面</div><div class="tab on2">配筋</div></div>
          <div class="tc">
            ${this.row(rr1, 1091, "rt")}
            <div class="row rsel" style="padding-left:${1096 - 1091}px">
              <div class="it grip" style="width:6px"></div><span class="off">钢筋信息</span><div class="combo"></div>
            </div>
            <div class="prev">${this.preview()}</div>
          </div>
          <div class="stat"><div class="s1">(X: -355 Y: -286)</div><div class="s2"></div></div>
        </div>
      </div>
      <div class="foot"><i class="f1"></i><i class="f2"></i><i class="f3"></i><i class="f4"></i></div>

      <div class="tip">Poi...<i></i></div>
      <div class="pop">开始</div>

      <div class="ime">
        <span>英</span>
        <svg viewBox="0 0 16 16">${f("M10 1a7 7 0 1 1-9 9q7 2 9-9z", "#1a64c0")}</svg>
        <svg viewBox="0 0 16 16"><circle cx="4" cy="6" r="1.500" fill="#1a64c0"/>${s("M9 4q3 2 1 6", "#1a64c0", 2)}</svg>
        <svg viewBox="0 0 16 16">${f("M6 1h4v8H6z", "#1a64c0")}${s("M3 7q0 5 5 5t5-5M8 12v3", "#1a64c0", 1.500)}</svg>
        <svg viewBox="0 0 16 16">${f("M1 3h14v10H1z", "#1a64c0")}${s("M3 6h10M3 8.500h10M5 11h6", "#fff", 1.300)}</svg>
        <svg viewBox="0 0 16 16"><circle cx="7" cy="4" r="3" fill="#9aa8b8"/>${f("M2 15q0-6 5-6t5 6z", "#9aa8b8")}</svg>
        <svg viewBox="0 0 16 16">${f("M5 1l3 2 3-2 4 3-2 3-1-1v9H4V6L3 7 1 4z", "#1a64c0")}</svg>
        <svg viewBox="0 0 16 16">${f("M14 1l-3 3 1 2 3-2q1 4-3 5L4 15 1 12 8 5q0-4 6-4z", "#1a64c0")}</svg>
      </div>
      <div class="logo">S</div>

      <svg class="usr" viewBox="0 0 15 16">${f("M0 2q0-2 2-2h11q2 0 2 2v12q0 2-2 2H2q-2 0-2-2z", "#2a82d0")}<circle cx="7.500" cy="6" r="3" fill="#fff"/>${f("M3 13q0-4 4.500-4t4.500 4z", "#fff")}</svg>
      <span class="acc">13907298339</span><i class="acar"></i><span class="acc2">造价豆:0</span>
      <svg class="bell" viewBox="0 0 16 18">${f("M8 1q4 0 4 5v4l3 3H1l3-3V6q0-5 4-5z", "#2a70d8")}${f("M6 14h4l-2 3z", "#e8a040")}</svg>
      <span class="mo">»</span>
    `;
  }
}
